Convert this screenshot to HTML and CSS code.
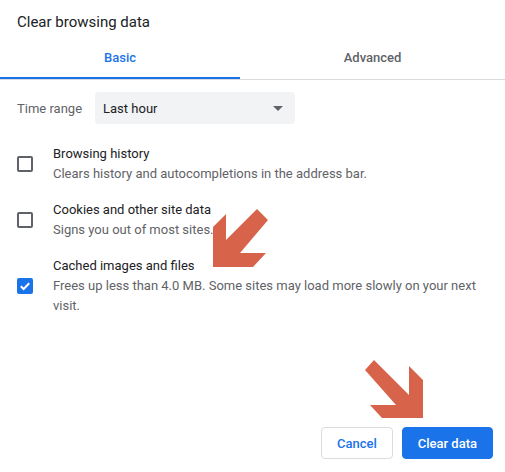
FILE: index.html
```html
<!DOCTYPE html>
<html lang="en">
<head>
    <meta charset="UTF-8">
    <meta name="viewport" content="width=device-width, initial-scale=1.0">
    <title>Clear browsing data</title>
    <link rel="stylesheet" href="styles.css">
</head>

<body>
    <div class="dialog">
        <!-- title -->
        <div class="title">Clear browsing data</div>

        <!-- tabs -->
        <div class="tabs">
            <div class="tab active">Basic</div>
            <div class="tab">Advanced</div>
        </div>

        <!-- time range -->
        <div class="range">
            <span class="range-label">Time range</span>
            <div class="select">
                <span>Last hour</span>
                <span class="caret"></span>
            </div>
        </div>

        <!-- options -->
        <div class="options">
            <div class="option">
                <span class="box"></span>
                <div class="text">
                    <div class="label">Browsing history</div>
                    <div class="sub">Clears history and autocompletions in the address bar.</div>
                </div>
            </div>
            <div class="option">
                <span class="box"></span>
                <div class="text">
                    <div class="label">Cookies and other site data</div>
                    <div class="sub">Signs you out of most sites.</div>
                </div>
            </div>
            <div class="option">
                <span class="box checked">
                    <svg width="12" height="12" viewBox="0 0 12 12"><path d="M1.8 6.2 L4.6 9 L10.2 3.2" fill="none" stroke="#fff" stroke-width="2"/></svg>
                </span>
                <div class="text">
                    <div class="label">Cached images and files</div>
                    <div class="sub">Frees up less than 4.0 MB. Some sites may load more slowly on your next visit.</div>
                </div>
            </div>
        </div>

        <!-- buttons -->
        <div class="footer">
            <button class="btn btn-cancel">Cancel</button>
            <button class="btn btn-clear">Clear data</button>
        </div>
    </div>

    <!-- annotation arrows -->
    <svg class="arrows" width="505" height="472" viewBox="0 0 505 472">
        <polygon fill="#d7644a" points="213,227 226,214 226,240 257,209 268,220 240,253 266,253 253,267 213,267"/>
        <polygon fill="#d7644a" points="365,370 374,360 409,395 409,366 423,380 423,418 382,418 370,405 396,405"/>
    </svg>
</body>
</html>
```

FILE: styles.css
```css
body{
 margin: 0;
 font-family: Roboto, "Liberation Sans", sans-serif;
 color: #202124;
 background: #fff;
}
.dialog{
 height: 100vh;
 display: flex;
 flex-direction: column;
}
.title{
 padding: 12px 17px 0;
 font-size: 15px;
 line-height: 20px;
}
.tabs{
 display: flex;
 margin-top: 5px;
 border-bottom: 1px solid #dadce0;
}
.tab{
 width: 265px;
 height: 38px;
 padding-top: 2px;
 line-height: 38px;
 text-align: center;
 font-size: 13px;
 font-weight: 500;
 color: #5f6368;
 border-bottom: 2px solid transparent;
}
.tab.active{
 width: 240px;
 color: #1a73e8;
 border-bottom-color: #1a73e8;
}
.range{
 display: flex;
 align-items: center;
 gap: 13px;
 padding: 12px 17px 0;
}
.range-label{
 font-size: 13px;
 color: #5f6368;
}
.select{
 width: 200px;
 height: 32px;
 box-sizing: border-box;
 padding: 0 12px 0 8px;
 background: #f1f3f4;
 border-radius: 4px;
 display: flex;
 align-items: center;
 justify-content: space-between;
 font-size: 13px;
}
.caret{
 width: 0;
 height: 0;
 border-left: 5px solid transparent;
 border-right: 5px solid transparent;
 border-top: 5px solid #5f6368;
}
.options{
 padding: 20px 17px 0;
 display: flex;
 flex-direction: column;
 gap: 16px;
}
.option{
 display: flex;
 align-items: center;
 gap: 20px;
}
.box{
 width: 16px;
 height: 16px;
 box-sizing: border-box;
 border: 2px solid #5f6368;
 border-radius: 2px;
 flex-shrink: 0;
 display: flex;
 align-items: center;
 justify-content: center;
}
.box.checked{
 background: #1a73e8;
 border-color: #1a73e8;
}
.label{
 font-size: 13px;
 line-height: 20px;
}
.sub{
 font-size: 13px;
 line-height: 20px;
 color: #5f6368;
}
.footer{
 margin-top: auto;
 display: flex;
 justify-content: flex-end;
 gap: 9px;
 padding: 0 12px 13px;
}
.btn{
 height: 32px;
 border-radius: 4px;
 font-family: Roboto, "Liberation Sans", sans-serif;
 font-size: 13px;
 font-weight: 500;
 padding: 0 15px;
 cursor: pointer;
}
.btn-cancel{
 background: #fff;
 color: #1a73e8;
 border: 1px solid #dadce0;
}
.btn-clear{
 background: #1a73e8;
 color: #fff;
 border: 1px solid #1a73e8;
}
.arrows{
 position: absolute;
 left: 0;
 top: 0;
 pointer-events: none;
}
```
